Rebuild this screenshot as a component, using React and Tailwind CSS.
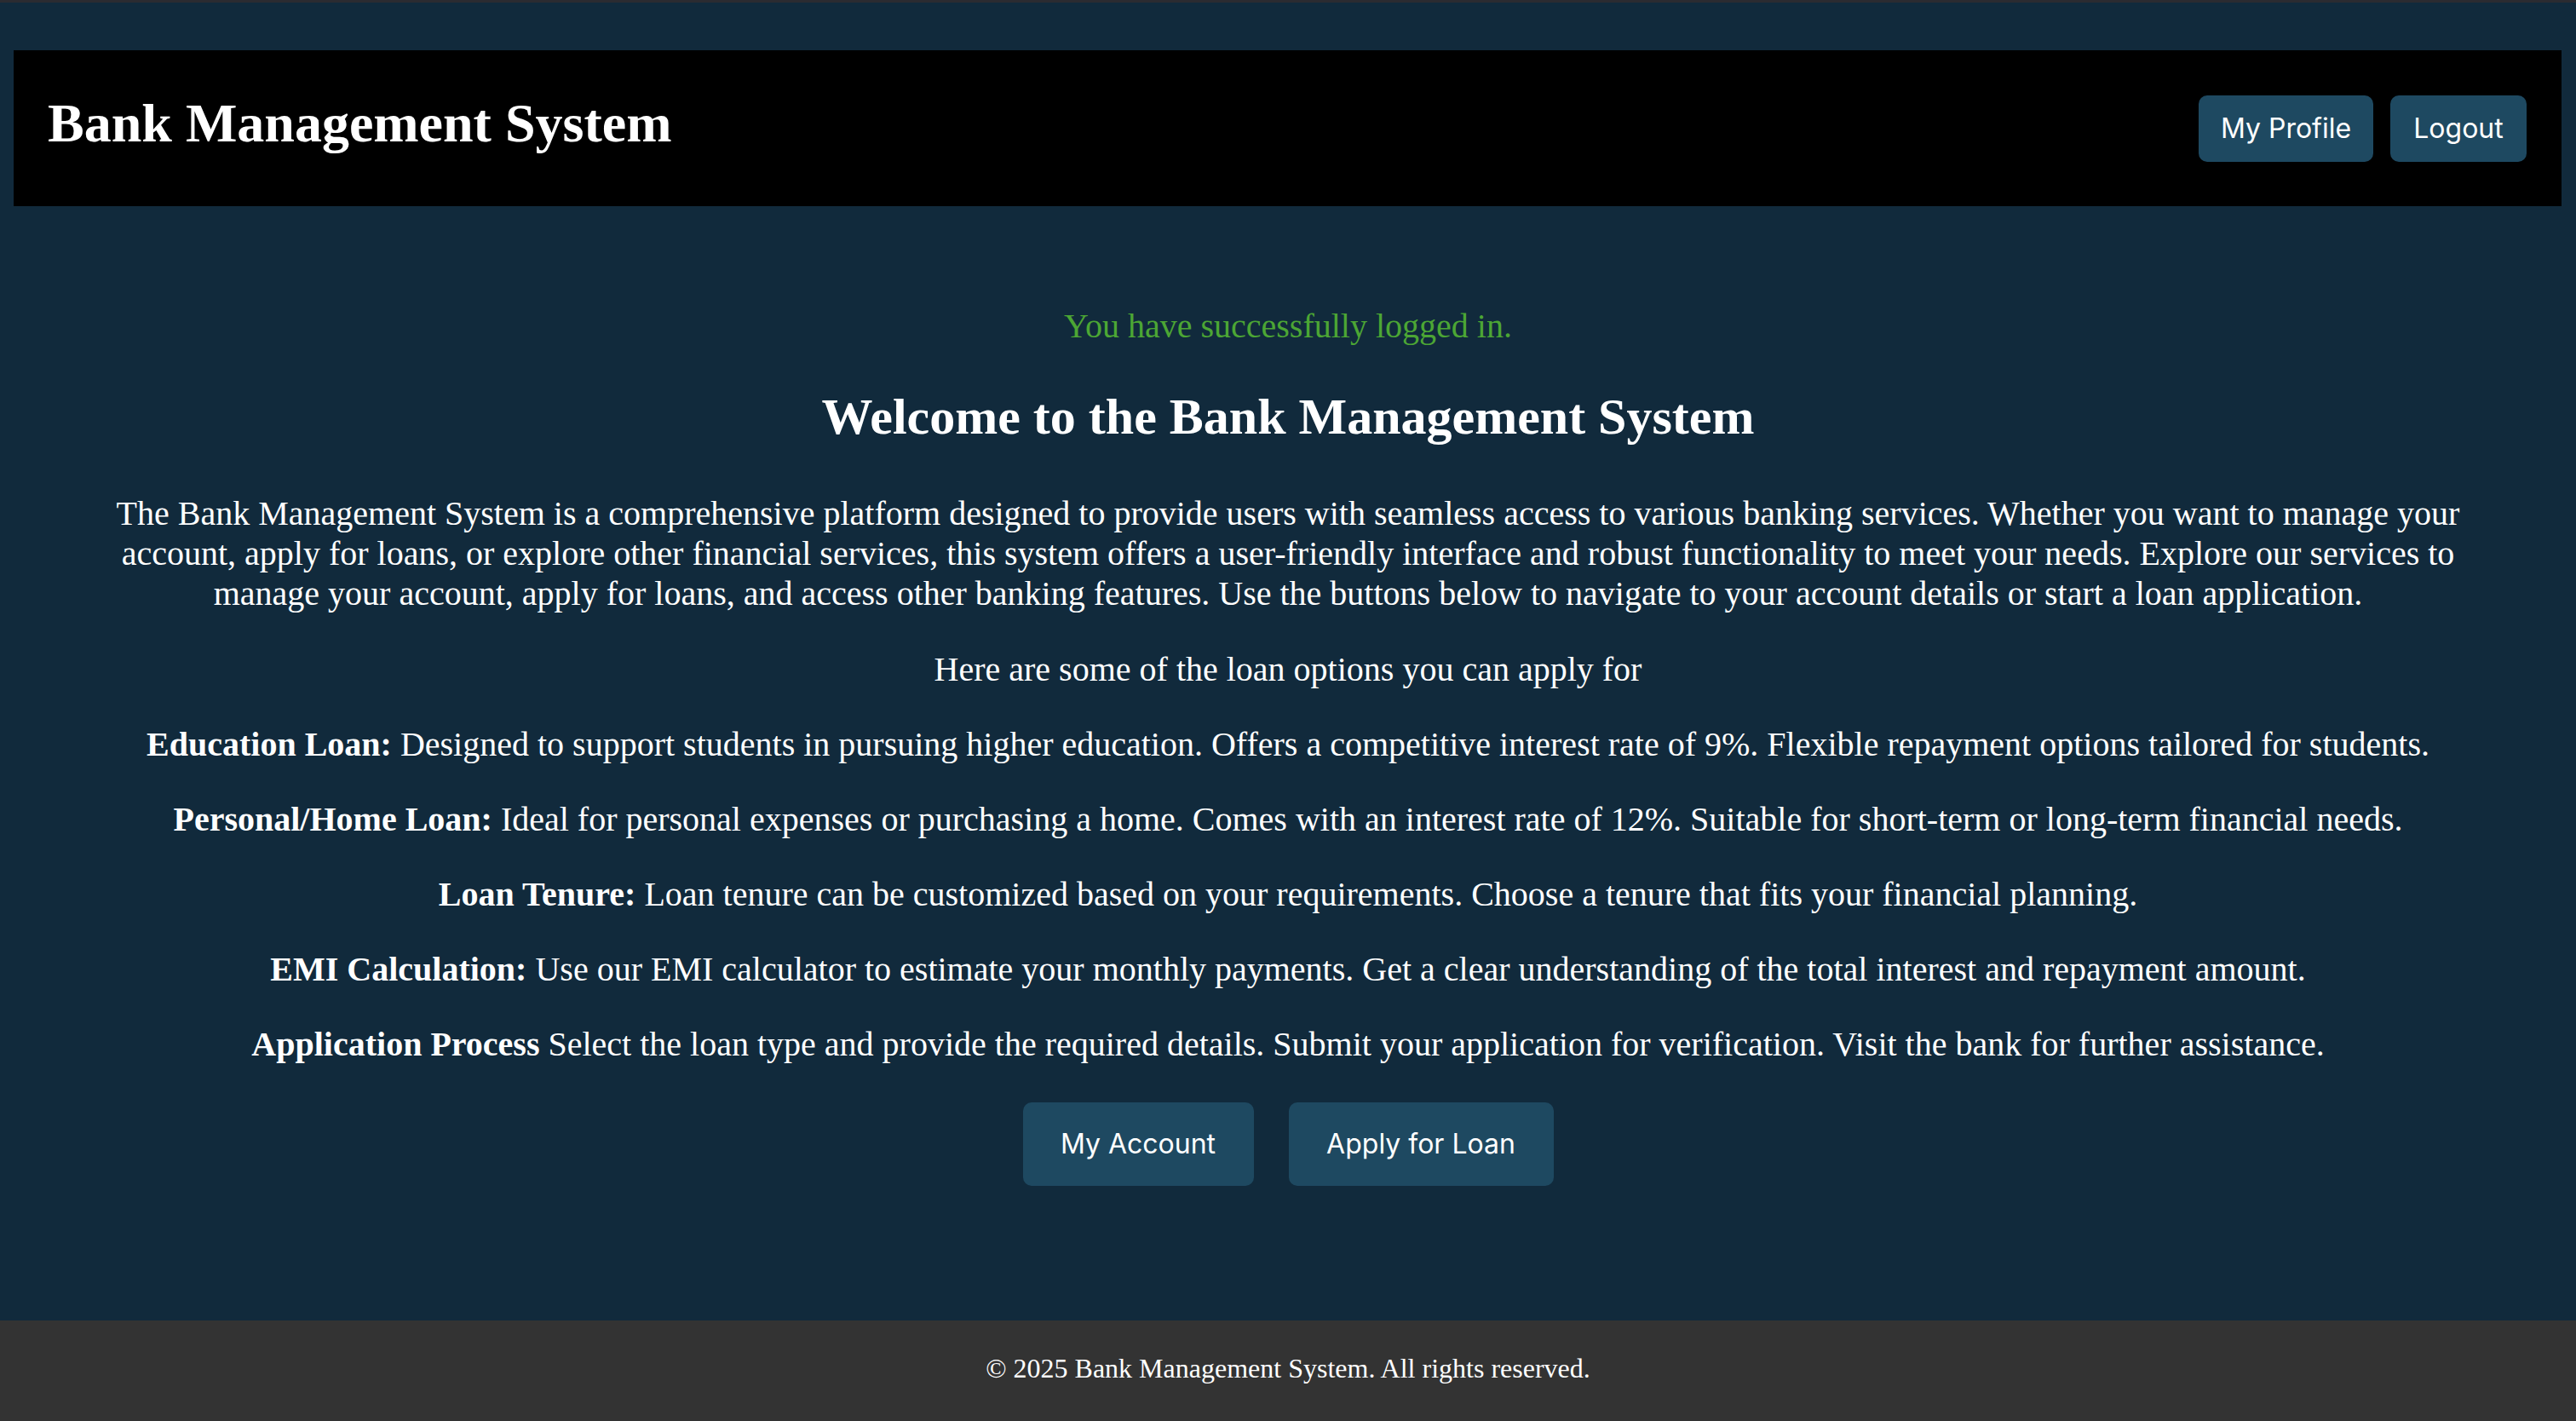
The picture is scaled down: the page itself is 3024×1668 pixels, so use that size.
const loanOptions = [
  {
    title: 'Education Loan:',
    text: 'Designed to support students in pursuing higher education. Offers a competitive interest rate of 9%. Flexible repayment options tailored for students.',
  },
  {
    title: 'Personal/Home Loan:',
    text: 'Ideal for personal expenses or purchasing a home. Comes with an interest rate of 12%. Suitable for short-term or long-term financial needs.',
  },
  {
    title: 'Loan Tenure:',
    text: 'Loan tenure can be customized based on your requirements. Choose a tenure that fits your financial planning.',
  },
  {
    title: 'EMI Calculation:',
    text: 'Use our EMI calculator to estimate your monthly payments. Get a clear understanding of the total interest and repayment amount.',
  },
  {
    title: 'Application Process',
    text: 'Select the loan type and provide the required details. Submit your application for verification. Visit the bank for further assistance.',
  },
];

const App = () => {
  return (
    <div className="min-h-screen flex flex-col bg-[#112a3c] font-['Liberation_Serif','Times_New_Roman',serif] text-white">
      <div className="h-[3px] bg-[#2b2b31]"></div>

      {/* Header */}
      <header className="mt-[56px] ml-[16px] mr-[17px] h-[183px] bg-black flex items-center justify-between pl-[40px] pr-[41px]">
        <h1 className="text-[64px] font-bold leading-[1.15] mb-[12px]">Bank Management System</h1>
        <div className="flex items-center gap-[20px] font-['Inter','Noto_Sans',sans-serif] text-[32px] leading-none">
          <button className="w-[205px] h-[78px] rounded-[10px] bg-[#1e4961] text-white">My Profile</button>
          <button className="w-[160px] h-[78px] rounded-[10px] bg-[#1e4961] text-white">Logout</button>
        </div>
      </header>

      {/* Main */}
      <main className="flex-1 flex flex-col items-center text-center px-[80px] text-[40px] leading-[46px]">
        <p className="mt-[118px] text-[#4ca634]">You have successfully logged in.</p>
        <h2 className="mt-[49px] text-[60px] font-bold leading-[69px]">Welcome to the Bank Management System</h2>
        <p className="mt-[55px] leading-[47px]">
          The Bank Management System is a comprehensive platform designed to provide users with seamless access to various banking services. Whether you want to manage your account, apply for loans, or explore other financial services, this system offers a user-friendly interface and robust functionality to meet your needs. Explore our services to manage your account, apply for loans, and access other banking features. Use the buttons below to navigate to your account details or start a loan application.
        </p>
        <p className="mt-[43px]">Here are some of the loan options you can apply for</p>
        {loanOptions.map((item) => (
          <p key={item.title} className="mt-[42px]">
            <strong className="font-bold">{item.title}</strong> {item.text}
          </p>
        ))}
        <div className="mt-[45px] flex items-center gap-[41px] font-['Inter','Noto_Sans',sans-serif] text-[32px] leading-none">
          <button className="w-[271px] h-[98px] rounded-[10px] bg-[#1e4961] text-white">My Account</button>
          <button className="w-[311px] h-[98px] rounded-[10px] bg-[#1e4961] text-white">Apply for Loan</button>
        </div>
      </main>

      {/* Footer */}
      <footer className="h-[118px] bg-[#333333] flex items-center justify-center pb-[6px] text-[32px] leading-[37px]">
        <p>&copy; 2025 Bank Management System. All rights reserved.</p>
      </footer>
    </div>
  );
};

export default App;
